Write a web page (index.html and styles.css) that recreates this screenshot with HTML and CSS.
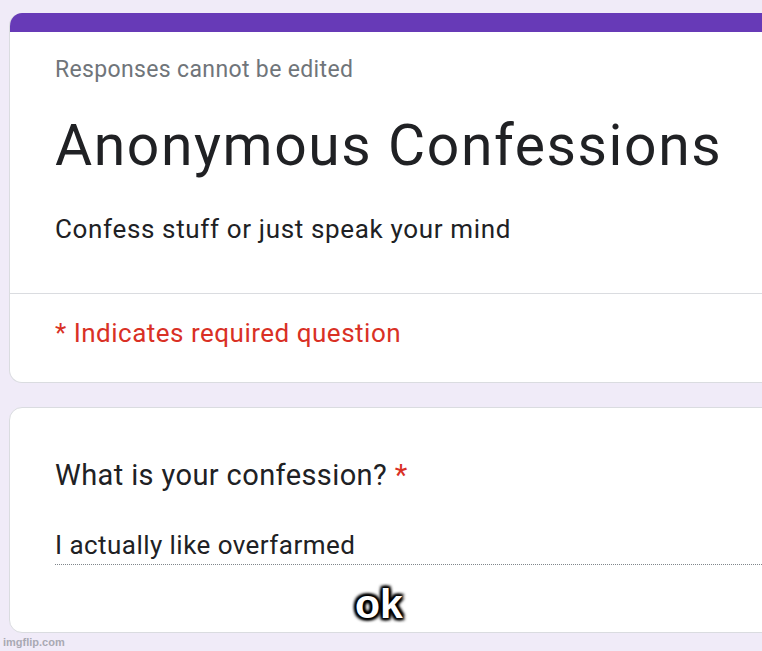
FILE: index.html
```html
<!DOCTYPE html>
<html lang="en">
<head>
<meta charset="utf-8">
<title>Anonymous Confessions</title>
<link rel="stylesheet" href="styles.css">
</head>
<body>
<main class="page">
  <section class="card header-card">
    <div class="band"></div>
    <div class="header-body">
      <div class="note">Responses cannot be edited</div>
      <h1 class="title">Anonymous Confessions</h1>
      <p class="desc">Confess stuff or just speak your mind</p>
    </div>
    <div class="required-row">* Indicates required question</div>
  </section>
  <section class="card question-card">
    <div class="question">What is your confession? <span class="star">*</span></div>
    <div class="answer">I actually like overfarmed</div>
  </section>
</main>
<div class="meme-caption">ok</div>
<div class="watermark">imgflip.com</div>
</body>
</html>
```
FILE: styles.css
```css
html, body {
  margin: 0;
  padding: 0;
  overflow: hidden;
  height: 651px;
}
body {
  background: #f0ebf8;
  font-family: Roboto, "Noto Sans", Arial, sans-serif;
  color: #202124;
  position: relative;
}
.page {
  padding: 13px 0 0 9px;
  display: flex;
  flex-direction: column;
  gap: 24px;
}
.card {
  width: 820px;
  background: #ffffff;
  border: 1px solid #dadce0;
  border-radius: 13px;
  box-sizing: border-box;
}
.header-card {
  border-top: none;
  overflow: hidden;
}
.band {
  height: 19px;
  background: #673ab7;
  margin: 0 -1px;
}
.header-body {
  padding: 24px 45px 49px;
  border-bottom: 1px solid #dadce0;
}
.note {
  font-size: 23px;
  line-height: 28px;
  letter-spacing: 0.35px;
  color: #70757a;
}
.title {
  margin: 30px 0 0;
  font-size: 57px;
  line-height: 64px;
  font-weight: 400;
  letter-spacing: 1.6px;
  color: #202124;
}
.desc {
  margin: 36px 0 0;
  font-size: 26px;
  line-height: 30px;
  letter-spacing: 0.65px;
}
.required-row {
  padding: 24px 45px 34px;
  font-size: 26px;
  line-height: 30px;
  letter-spacing: 0.5px;
  color: #d93025;
}
.question-card {
  padding: 50px 0 0 45px;
  height: 226px;
}
.question {
  font-size: 29px;
  line-height: 34px;
  letter-spacing: 0.4px;
}
.star {
  color: #d93025;
}
.answer {
  margin-top: 38px;
  font-size: 26px;
  line-height: 30px;
  letter-spacing: 0.45px;
  padding-bottom: 4px;
  border-bottom: 1px dotted #80868b;
}
.meme-caption {
  position: absolute;
  left: 355px;
  top: 581px;
  font-family: "Liberation Sans", Arial, sans-serif;
  font-weight: 700;
  font-size: 41px;
  line-height: 46px;
  color: #ffffff;
  text-shadow: 0 0 2px #000, 0 0 2px #000, 0 0 4px #000, 0 0 5px #000, 2px 2px 3px #000, -2px -2px 3px #000, 2px -2px 3px #000, -2px 2px 3px #000;
}
.watermark {
  position: absolute;
  left: 3px;
  top: 636px;
  font-family: "Liberation Sans", Arial, sans-serif;
  font-weight: 700;
  font-size: 11px;
  line-height: 13px;
  color: #a9a9b3;
}
```
